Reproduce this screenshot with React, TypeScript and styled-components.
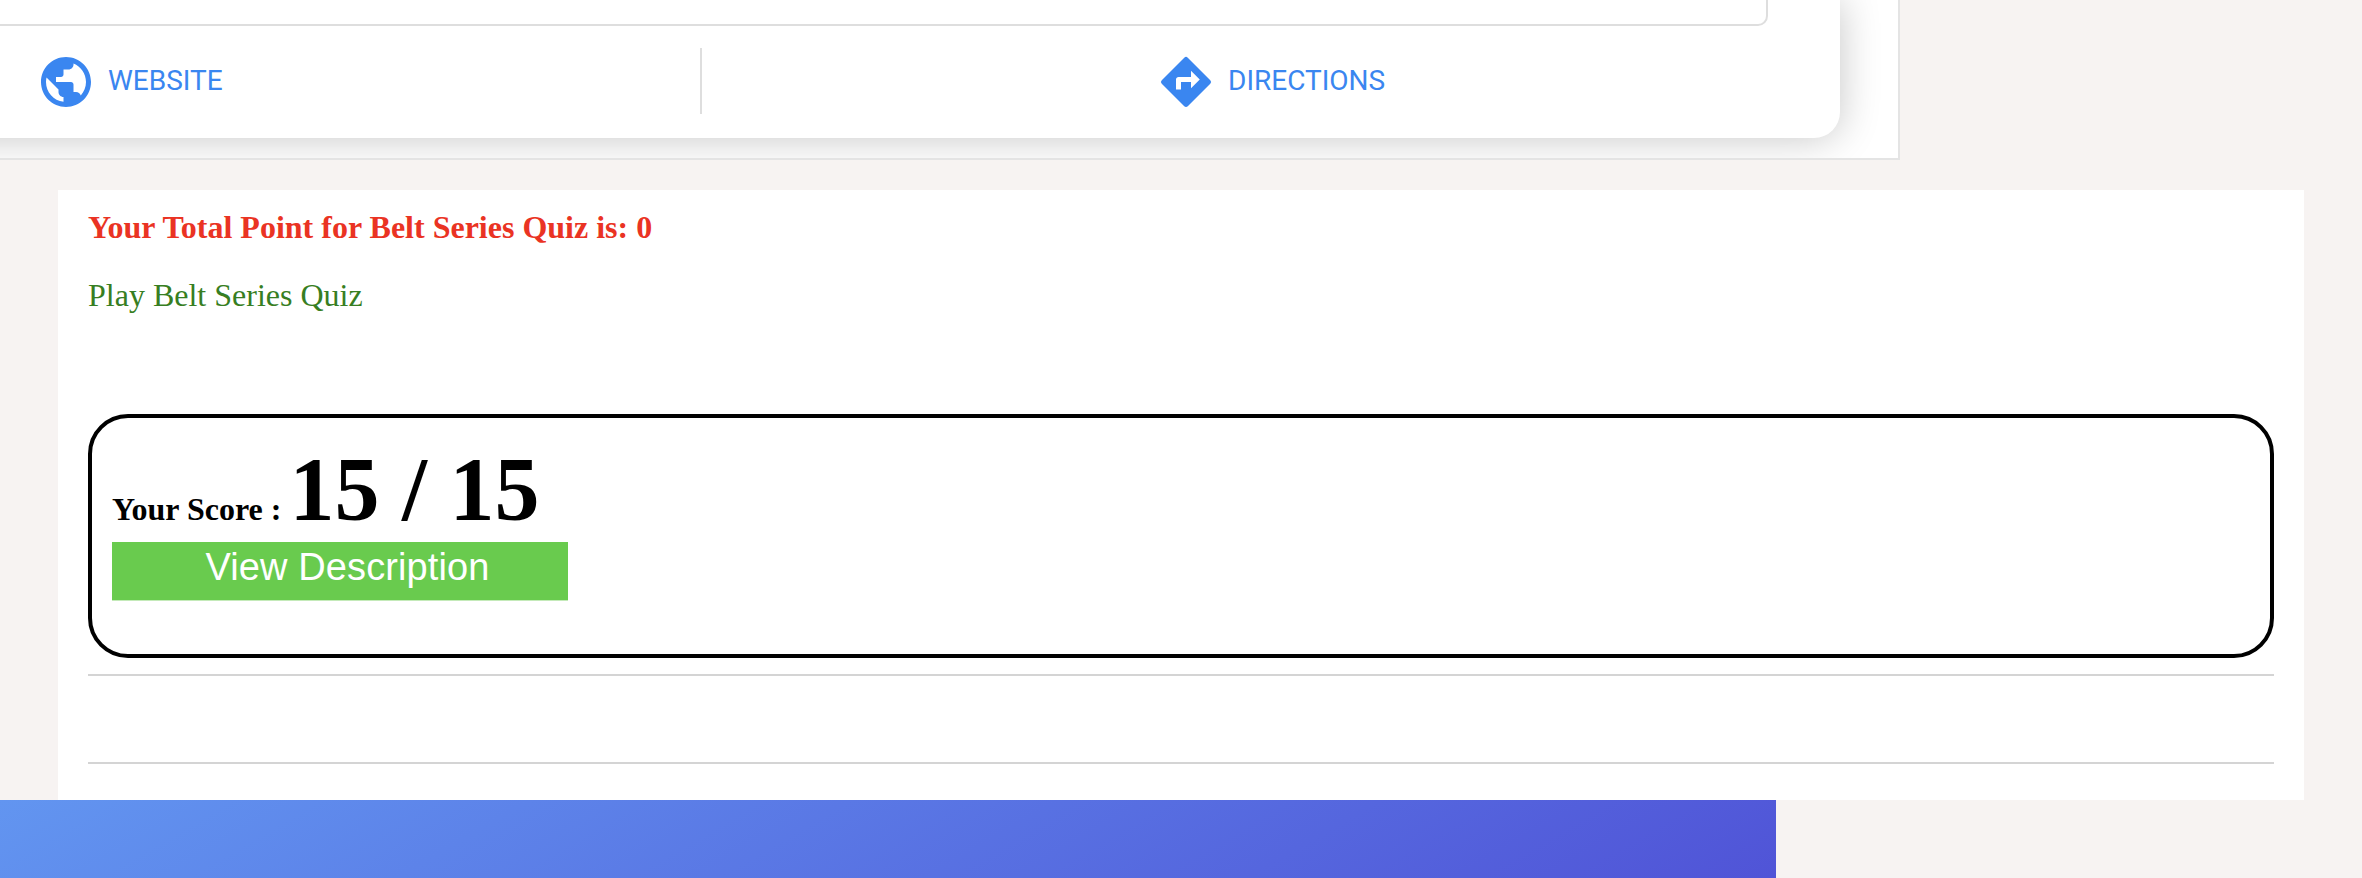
import React from "react";
import styled, { createGlobalStyle } from "styled-components";

const GlobalStyle = createGlobalStyle`
  * { box-sizing: border-box; }
  body {
    margin: 0;
    background: #f7f3f2;
    overflow: hidden;
  }
`;

const Page = styled.div`
  width: 2362px;
  height: 878px;
  display: flex;
  flex-direction: column;
  overflow: hidden;
  font-family: "Liberation Serif", "Times New Roman", serif;
  font-size: 32px;
`;

const CardFrame = styled.section`
  width: 1900px;
  height: 160px;
  flex: none;
  overflow: hidden;
  background: #fff;
  border: solid #e4e4e4;
  border-width: 0 2px 2px 0;
`;

const ContactCard = styled.div`
  width: 1940px;
  height: 138px;
  margin-left: -100px;
  padding-left: 100px;
  background: #fff;
  border-bottom-right-radius: 26px;
  box-shadow: 0 0 40px rgba(0, 0, 0, 0.23);
`;

const CardDetails = styled.div`
  width: 1768px;
  height: 26px;
  border: solid #dedede;
  border-width: 0 2px 2px 0;
  border-bottom-right-radius: 10px;
`;

const Actions = styled.nav`
  display: flex;
  align-items: center;
  height: 110px;
`;

const Action = styled.a<{ $width: number; $indent: number }>`
  display: flex;
  align-items: center;
  width: ${(p) => p.$width}px;
  height: 62px;
  padding-top: 2px;
  padding-left: ${(p) => p.$indent}px;
  gap: 12px;
  color: #3a86f0;
  font: 400 28px/56px Roboto, sans-serif;
`;

const ActionLabel = styled.span`
  padding-bottom: 2px;
`;

const Divider = styled.div`
  width: 2px;
  height: 66px;
  background: #dedede;
`;

const QuizPanel = styled.main`
  width: 2246px;
  height: 610px;
  flex: none;
  margin: 30px 0 0 58px;
  padding: 18px 30px 0;
  background: #fff;
`;

const TotalPoints = styled.h3`
  margin: 0;
  font-size: 32px;
  line-height: 36px;
  font-weight: 700;
  color: #ea3323;
  padding-top: 1px;
`;

const PlayLink = styled.a`
  display: block;
  margin-top: 32px;
  line-height: 36px;
  color: #377e22;
`;

const ScoreBox = styled.div`
  height: 244px;
  margin-top: 101px;
  padding: 22px 20px 0;
  border: 4px solid #000;
  border-radius: 40px;
  color: #000;
`;

const ScoreLine = styled.div`
  height: 102px;
  line-height: 100px;
  font-weight: 700;
  white-space: pre;
`;

const ScoreValue = styled.span`
  font-size: 90px;
`;

const DescriptionButton = styled.button`
  display: block;
  width: 456px;
  height: 59px;
  padding: 0 0 8px 15px;
  border: 0;
  background: #69cb4e;
  color: #fff;
  font: 400 38px/50px "Liberation Sans", Arial, sans-serif;
  letter-spacing: 0.1px;
  border-bottom: 1px solid #c4eab9;
`;

const Rule = styled.hr<{ $gap: number }>`
  height: 2px;
  margin: ${(p) => p.$gap}px 0 0;
  border: 0;
  background: #d4d4d4;
`;

const Banner = styled.footer`
  width: 1776px;
  height: 78px;
  flex: none;
  background: linear-gradient(150deg, #6295f0 0%, #5054d7 100%);
`;

const GlobeIcon = () => (
  <svg width="60" height="60" viewBox="0 0 24 24" fill="currentColor">
    <path d="M12 2C6.48 2 2 6.48 2 12s4.48 10 10 10 10-4.48 10-10S17.52 2 12 2zm-1 17.93c-3.95-.49-7-3.85-7-7.93 0-.62.08-1.21.21-1.79L9 15v1c0 1.1.9 2 2 2v1.93zm6.9-2.54c-.26-.81-1-1.39-1.9-1.39h-1v-3c0-.55-.45-1-1-1H8v-2h2c.55 0 1-.45 1-1V7h2c1.1 0 2-.9 2-2v-.41c2.93 1.19 5 4.06 5 7.41 0 2.08-.8 3.97-2.1 5.39z" />
  </svg>
);

const DirectionsIcon = () => (
  <svg width="60" height="60" viewBox="0 0 24 24" fill="currentColor">
    <path d="M21.71 11.29l-9-9a.996.996 0 0 0-1.41 0l-9 9a.996.996 0 0 0 0 1.41l9 9c.39.39 1.02.39 1.41 0l9-9a.996.996 0 0 0 0-1.41zM14 14.5V12h-4v3H8v-4c0-.55.45-1 1-1h5V7.5l3.5 3.5-3.5 3.5z" />
  </svg>
);

export default function App() {
  return (
    <Page>
      <GlobalStyle />
      <CardFrame>
        <ContactCard>
          <CardDetails />
          <Actions>
            <Action $width={700} $indent={36}>
              <GlobeIcon />
              <ActionLabel>WEBSITE</ActionLabel>
            </Action>
            <Divider />
            <Action $width={700} $indent={454}>
              <DirectionsIcon />
              <ActionLabel>DIRECTIONS</ActionLabel>
            </Action>
          </Actions>
        </ContactCard>
      </CardFrame>
      <QuizPanel>
        <TotalPoints>Your Total Point for Belt Series Quiz is: 0</TotalPoints>
        <PlayLink>Play Belt Series Quiz</PlayLink>
        <ScoreBox>
          <ScoreLine>
            Your Score : <ScoreValue>15 / 15</ScoreValue>
          </ScoreLine>
          <DescriptionButton>View Description</DescriptionButton>
        </ScoreBox>
        <Rule $gap={16} />
        <Rule $gap={86} />
      </QuizPanel>
      <Banner />
    </Page>
  );
}
